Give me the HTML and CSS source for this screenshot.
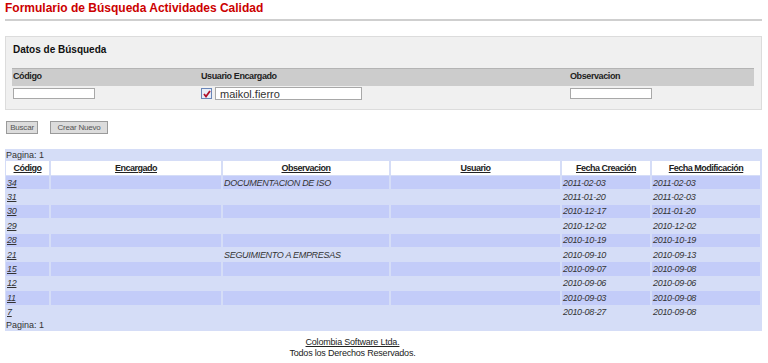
FILE: index.html
```html
<!DOCTYPE html>
<html lang="es">
<head>
    <meta charset="UTF-8">
    <title>Formulario de Búsqueda Actividades Calidad</title>
    <link rel="stylesheet" href="styles.css">
</head>
<body>
    <h1 class="titulo">Formulario de Búsqueda Actividades Calidad</h1>
    <hr class="linea">

    <div class="panel">
        <h2 class="panel-titulo">Datos de Búsqueda</h2>
        <div class="filtros">
            <div class="etiqueta">Código</div>
            <div class="etiqueta">Usuario Encargado</div>
            <div class="etiqueta">Observacion</div>
            <div class="campo"><input type="text" class="caja caja-corta"></div>
            <div class="campo">
                <span class="check">
                    <svg width="8" height="8" viewBox="0 0 8 8"><path d="M1 4 L3 6.5 L7 1" fill="none" stroke="#b0102a" stroke-width="1.8"/></svg>
                </span>
                <input type="text" class="caja caja-larga" value="maikol.fierro">
            </div>
            <div class="campo"><input type="text" class="caja caja-corta"></div>
        </div>
    </div>

    <div class="acciones">
        <button class="boton">Buscar</button>
        <button class="boton boton-ancho">Crear Nuevo</button>
    </div>

    <table class="resultados">
        <colgroup>
            <col style="width:43px"><col style="width:170px"><col style="width:166px">
            <col style="width:169px"><col style="width:88px"><col>
        </colgroup>
        <tr class="fila-pagina"><td colspan="6" class="pagina">Pagina: 1</td></tr>
        <tr class="cabecera">
            <th><a href="#">Código</a></th>
            <th><a href="#">Encargado</a></th>
            <th><a href="#">Observacion</a></th>
            <th><a href="#">Usuario</a></th>
            <th><a href="#">Fecha Creación</a></th>
            <th><a href="#">Fecha Modificación</a></th>
        </tr>
        <tr class="par"><td><a href="#">34</a></td><td></td><td>DOCUMENTACION DE ISO</td><td></td><td>2011-02-03</td><td>2011-02-03</td></tr>
        <tr><td><a href="#">31</a></td><td></td><td></td><td></td><td>2011-01-20</td><td>2011-02-03</td></tr>
        <tr class="par"><td><a href="#">30</a></td><td></td><td></td><td></td><td>2010-12-17</td><td>2011-01-20</td></tr>
        <tr><td><a href="#">29</a></td><td></td><td></td><td></td><td>2010-12-02</td><td>2010-12-02</td></tr>
        <tr class="par"><td><a href="#">28</a></td><td></td><td></td><td></td><td>2010-10-19</td><td>2010-10-19</td></tr>
        <tr><td><a href="#">21</a></td><td></td><td>SEGUIMIENTO A EMPRESAS</td><td></td><td>2010-09-10</td><td>2010-09-13</td></tr>
        <tr class="par"><td><a href="#">15</a></td><td></td><td></td><td></td><td>2010-09-07</td><td>2010-09-08</td></tr>
        <tr><td><a href="#">12</a></td><td></td><td></td><td></td><td>2010-09-06</td><td>2010-09-06</td></tr>
        <tr class="par"><td><a href="#">11</a></td><td></td><td></td><td></td><td>2010-09-03</td><td>2010-09-08</td></tr>
        <tr><td><a href="#">7</a></td><td></td><td></td><td></td><td>2010-08-27</td><td>2010-09-08</td></tr>
        <tr class="fila-pagina"><td colspan="6" class="pagina">Pagina: 1</td></tr>
    </table>

    <div class="pie">
        <a href="#">Colombia Software Ltda.</a><br>
        Todos los Derechos Reservados.
    </div>
</body>
</html>
```

FILE: styles.css
```css
body {
    font-family: 'Liberation Sans', Arial, sans-serif;
    font-size: 11px;
    color: #333;
    margin: 0 6px 0 5px;
    background: white;
}
.titulo {
    color: #cc0000;
    font-size: 12px;
    font-weight: bold;
    margin: 0;
    padding-top: 1px;
    line-height: 15px;
}
.linea {
    border: none;
    border-top: 2px solid #cfcfcf;
    margin: 3px 0 0 0;
}
.panel {
    margin-top: 15px;
    background: #f0f0f0;
    border: 1px solid #dcdcdc;
    padding: 6px 7px 9px 6px;
}
.panel-titulo {
    font-size: 10px;
    font-weight: bold;
    color: #111;
    margin: 0 0 0 1px;
    line-height: 13px;
}
.filtros {
    margin-top: 12px;
    display: grid;
    grid-template-columns: 188px 369px 1fr;
}
.etiqueta {
    background: #cccccc;
    border-top: 1px solid #b4b4b4;
    height: 18px;
    font-size: 9px;
    letter-spacing: -0.4px;
    font-weight: bold;
    color: #222;
    padding: 1px 0 0 1px;
    box-sizing: border-box;
    line-height: 12px;
}
.campo {
    display: flex;
    align-items: center;
    gap: 3px;
    padding: 1px 0 0 1px;
    height: 13px;
}
.caja {
    border: 1px solid #a8a8a8;
    background: white;
    box-sizing: border-box;
    padding: 0 4px;
    font-family: 'Liberation Sans', Arial, sans-serif;
    color: #333;
    margin: 0;
}
.caja-corta {
    width: 82px;
    height: 11px;
}
.caja-larga {
    width: 147px;
    height: 13px;
    font-size: 11px;
}
.check {
    width: 9px;
    height: 9px;
    border: 1px solid #6a86b8;
    background: #e8eef8;
    display: inline-flex;
    align-items: center;
    justify-content: center;
}
.acciones {
    margin-top: 11px;
    display: flex;
    gap: 12px;
    padding-left: 1px;
}
.boton {
    font-family: 'Liberation Sans', Arial, sans-serif;
    font-size: 8px;
    color: #555;
    background: #dcdcdc;
    border: 1px solid #9a9a9a;
    height: 13px;
    width: 32px;
    padding: 0;
    letter-spacing: -0.2px;
}
.boton-ancho {
    width: 58px;
}
.resultados {
    margin-top: 15px;
    margin-left: -1px;
    width: calc(100% + 1px);
    table-layout: fixed;
    background: #d5ddf7;
    border-spacing: 2px 1px;
    font-size: 9px;
    letter-spacing: -0.3px;
}
.resultados td, .resultados th {
    height: 13.4px;
    padding: 0 1px;
    line-height: 12px;
    white-space: nowrap;
    overflow: hidden;
}
.resultados td {
    font-style: italic;
    color: #333;
}
.resultados a {
    color: #333;
}
.fila-pagina td {
    height: 10px;
    line-height: 10px;
}
.pagina {
    font-style: normal !important;
    padding: 0 !important;
    letter-spacing: 0;
}
.cabecera th {
    height: 14px;
    background: white;
    font-weight: bold;
    text-align: center;
    letter-spacing: -0.5px;
}
.cabecera th a {
    color: #222;
}
.par td {
    background: #c3ccf9;
}
.pie {
    text-align: center;
    font-size: 9px;
    line-height: 11px;
    margin-top: 6px;
    padding-right: 62px;
    letter-spacing: -0.2px;
    color: #222;
}
.pie a {
    color: #222;
}
```
